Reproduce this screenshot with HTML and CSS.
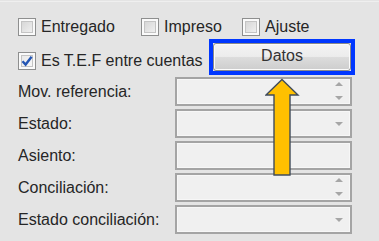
FILE: index.html
```html
<!DOCTYPE html>
<html lang="es">
<head>
  <meta charset="UTF-8" />
  <meta name="viewport" content="width=device-width, initial-scale=1.0"/>
  <title>Datos movimiento</title>
  <link rel="stylesheet" href="styles.css">
</head>
<body>
  <div class="panel">
    <div class="checks">
      <label class="check check-wide"><span class="box"></span>Entregado</label>
      <label class="check check-mid"><span class="box"></span>Impreso</label>
      <label class="check"><span class="box"></span>Ajuste</label>
    </div>

    <div class="row-tef">
      <label class="check check-tef">
        <span class="box checked">
          <svg width="12" height="12" viewBox="0 0 12 12"><path d="M1.5 6.2 L4.6 9.6 L10.6 1.8" fill="none" stroke="#2456b4" stroke-width="2.4"/></svg>
        </span>Es T.E.F entre cuentas</label>
      <div class="highlight-box"><button class="btn">Datos</button></div>
    </div>

    <div class="fields">
      <span class="lbl">Mov. referencia:</span>
      <div class="field"><span class="spin"><i class="up"></i><i class="down"></i></span></div>

      <span class="lbl">Estado:</span>
      <div class="field"><span class="combo"><i class="down"></i></span></div>

      <span class="lbl">Asiento:</span>
      <div class="field"></div>

      <span class="lbl">Conciliación:</span>
      <div class="field"><span class="spin"><i class="up"></i><i class="down"></i></span></div>

      <span class="lbl">Estado conciliación:</span>
      <div class="field"><span class="combo"><i class="down"></i></span></div>
    </div>

    <!-- flecha que señala el botón -->
    <svg class="arrow" width="36" height="100" viewBox="0 0 36 100">
      <path d="M17 1.5 L33 17 L25 17 L25 97 L9 97 L9 17 L1 17 Z" fill="#ffc000" stroke="#3f4b5b" stroke-width="1.4" stroke-linejoin="miter"/>
    </svg>
  </div>
</body>
</html>
```

FILE: styles.css
```css
body {
  margin: 0;
  background-color: #e4e4e4;
  font-family: "Liberation Sans", Arial, sans-serif;
  font-size: 16px;
  color: #262626;
}

.panel {
  position: relative;
  margin-top: 1px;
  border-top: 1px solid #efefef;
  height: 239px;
  padding-left: 18px;
  box-sizing: border-box;
}

.checks {
  display: flex;
  align-items: center;
  padding-top: 15px;
  height: 20px;
}

.check {
  display: flex;
  align-items: center;
  gap: 5px;
  white-space: nowrap;
}

.check-wide {
  width: 123px;
}

.check-mid {
  width: 101px;
}

.box {
  width: 16px;
  height: 16px;
  border: 1px solid #8e8f8f;
  background: linear-gradient(135deg, #d0d0d0, #f6f6f6);
  box-shadow: inset 0 0 0 2px #fafafa, inset 0 0 0 3px #c4c4c4;
  display: flex;
  align-items: center;
  justify-content: center;
  flex-shrink: 0;
}

.box.checked {
  background: linear-gradient(135deg, #e6e6e6, #fbfbfb);
}

.row-tef {
  display: flex;
  align-items: center;
  margin-top: 2px;
  height: 36px;
}

.check-tef {
  width: 186px;
  margin-top: 8px;
}

.highlight-box {
  margin-left: 5px;
  width: 138px;
  height: 28px;
  border: 4px solid #0037ff;
  display: flex;
}

.btn {
  flex: 1;
  margin: 0;
  border: 1px solid #8a8a8a;
  border-radius: 3px;
  background: linear-gradient(#f4f4f4 0%, #ececec 48%, #dcdcdc 52%, #cdcdcd 100%);
  box-shadow: inset 0 0 0 1px #fbfbfb;
  font-family: "Liberation Sans", Arial, sans-serif;
  font-size: 16px;
  color: #333;
  padding: 0 0 2px;
}

.fields {
  display: grid;
  grid-template-columns: 157px 177px;
  grid-auto-rows: 29px;
  row-gap: 3px;
  margin-top: 2px;
  align-items: center;
}

.lbl {
  white-space: nowrap;
}

.field {
  position: relative;
  height: 29px;
  box-sizing: border-box;
  border: 2px solid #a4a4a4;
  background-color: #f0f0f0;
  box-shadow: inset 0 0 0 1px #f7f7f7;
}

.spin,
.combo {
  position: absolute;
  right: 7px;
  top: 0;
  bottom: 0;
  width: 8px;
  display: flex;
  flex-direction: column;
  justify-content: space-between;
}

.spin {
  padding: 3px 0 4px;
}

.combo {
  justify-content: center;
}

.up {
  width: 0;
  height: 0;
  border-left: 4px solid transparent;
  border-right: 4px solid transparent;
  border-bottom: 4px solid #a6a6a6;
}

.down {
  width: 0;
  height: 0;
  border-left: 4px solid transparent;
  border-right: 4px solid transparent;
  border-top: 4px solid #a6a6a6;
}

.arrow {
  position: absolute;
  left: 265px;
  top: 76px;
}
```
